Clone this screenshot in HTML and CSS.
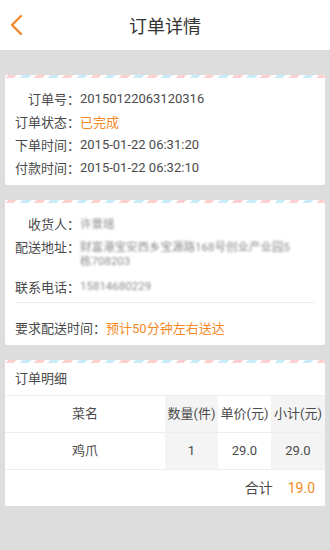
FILE: index.html
```html
<!DOCTYPE html>
<html lang="zh-CN">
<head>
<meta charset="utf-8">
<title>订单详情</title>
<link rel="stylesheet" href="styles.css">
</head>
<body>
<header class="topbar">
  <svg class="back" width="14" height="22" viewBox="0 0 14 22"><path d="M11 2 L2 11 L11 20" fill="none" stroke="#f5841f" stroke-width="2.2" stroke-linecap="round" stroke-linejoin="round"/></svg>
  <h1 class="title">订单详情</h1>
</header>
<main class="content">
  <section class="card info">
    <div class="stripe"></div>
    <div class="row"><span class="label">订单号<span class="colon">：</span></span><span class="value">20150122063120316</span></div>
    <div class="row"><span class="label">订单状态<span class="colon">：</span></span><span class="value orange">已完成</span></div>
    <div class="row"><span class="label">下单时间<span class="colon">：</span></span><span class="value">2015-01-22 06:31:20</span></div>
    <div class="row"><span class="label">付款时间<span class="colon">：</span></span><span class="value">2015-01-22 06:32:10</span></div>
  </section>
  <section class="card addr">
    <div class="stripe"></div>
    <div class="row"><span class="label">收货人<span class="colon">：</span></span><span class="value blur">许景瑶</span></div>
    <div class="row multi"><span class="label">配送地址<span class="colon">：</span></span><span class="value blur lines">财富港宝安西乡宝源路168号创业产业园5栋708203</span></div>
    <div class="row"><span class="label">联系电话<span class="colon">：</span></span><span class="value blur">15814680229</span></div>
    <div class="divider"></div>
    <div class="row plain"><span class="label-free">要求配送时间<span class="colon">：</span></span><span class="orange">预计50分钟左右送达</span></div>
  </section>
  <section class="card detail">
    <div class="stripe"></div>
    <div class="detail-title">订单明细</div>
    <div class="trow">
      <div class="cell name">菜名</div>
      <div class="cell shade">数量(件)</div>
      <div class="cell">单价(元)</div>
      <div class="cell shade">小计(元)</div>
    </div>
    <div class="trow">
      <div class="cell name">鸡爪</div>
      <div class="cell shade">1</div>
      <div class="cell">29.0</div>
      <div class="cell shade">29.0</div>
    </div>
    <div class="total"><span>合计</span><span class="orange">19.0</span></div>
  </section>
</main>
</body>
</html>
```
FILE: styles.css
```css
* { box-sizing: border-box; }
body {
  margin: 0;
  background: #dddddd;
  font-family: Roboto, "Noto Sans CJK SC", sans-serif;
  color: #4a4a4a;
  font-size: 13px;
}
.topbar {
  height: 51px;
  background: #fff;
  border-bottom: 1px solid #d8d8d8;
  display: flex;
  align-items: center;
  justify-content: center;
  position: relative;
}
.back {
  position: absolute;
  left: 10px;
  top: 14px;
}
.title {
  margin: 0;
  font-size: 18px;
  font-weight: normal;
  color: #333;
}
.content {
  padding: 24px 5px 0;
  display: flex;
  flex-direction: column;
  gap: 15px;
}
.card {
  background: #fff;
  border-radius: 2px;
  overflow: hidden;
}
.stripe {
  height: 3px;
  background: repeating-linear-gradient(-45deg,
    #ffd0d0 0 6px, #fff 6px 10px, #c9ecfa 10px 16px, #fff 16px 20px);
}
.info { padding-bottom: 6px; }
.info .stripe { margin-bottom: 9px; }
.row {
  display: flex;
  align-items: center;
  padding: 0 10px;
  height: 23px;
  white-space: nowrap;
}
.label {
  width: 65px;
  flex: none;
  text-align: right;
  white-space: nowrap;
}
.label-free { white-space: nowrap; }
.colon { font-family: "Noto Sans CJK TC", sans-serif; }
.orange { color: #f5891f; }
.addr { padding-bottom: 6px; }
.addr .stripe { margin-bottom: 8px; }
.addr .row { height: 24px; }
.addr .row.multi {
  height: auto;
  align-items: flex-start;
}
.addr .row.multi .label { line-height: 24px; }
.blur {
  color: #8a8a8a;
  filter: blur(1px);
  font-size: 11.5px;
}
.addr .row.multi .lines {
  white-space: normal;
  line-height: 14px;
  width: 215px;
  padding: 5px 0 6px 0;
}
.divider {
  height: 1px;
  background: #ececec;
  margin: 4px 10px 12px;
}
.detail-title {
  padding: 0 10px;
  height: 33px;
  line-height: 31px;
  border-bottom: 1px solid #eeeeee;
}
.trow {
  display: grid;
  grid-template-columns: 160px 53px 53px 54px;
  border-bottom: 1px solid #eeeeee;
}
.cell {
  height: 36px;
  line-height: 36px;
  text-align: center;
  white-space: nowrap;
}
.shade { background: #f4f4f4; }
.total {
  display: flex;
  justify-content: flex-end;
  gap: 15px;
  padding: 0 10px;
  height: 36px;
  line-height: 36px;
  font-size: 14px;
}
```
